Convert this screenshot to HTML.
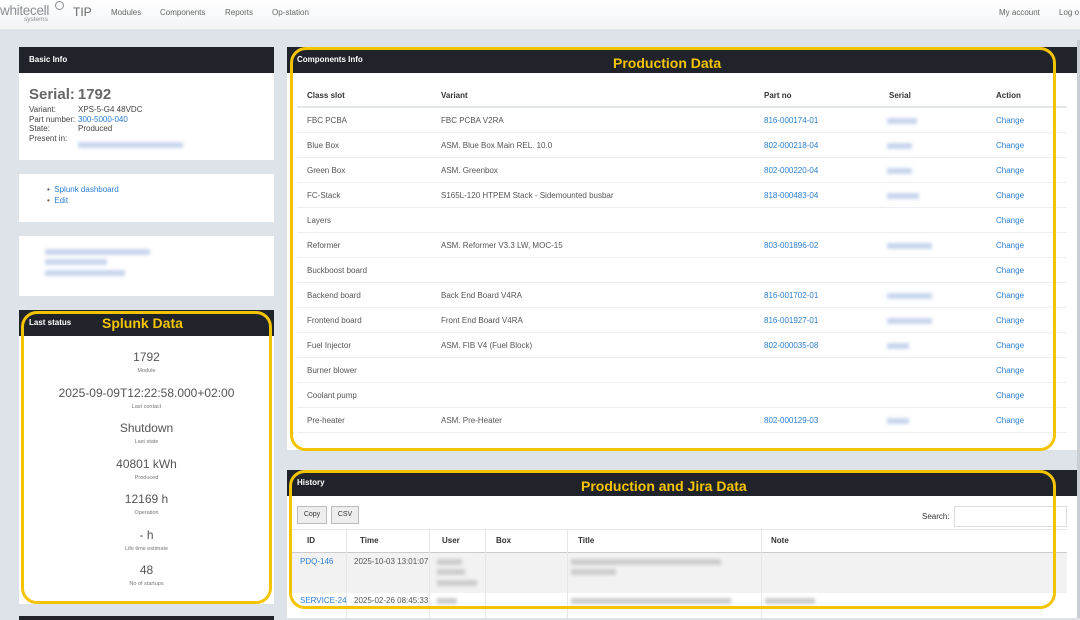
<!DOCTYPE html>
<html><head><meta charset="utf-8"><style>
*{margin:0;padding:0;box-sizing:border-box}
body{width:1080px;height:618px;overflow:hidden;background:#dde3e8;font-family:"Liberation Sans",sans-serif;color:#555;position:relative;font-size:8px}
.a{position:absolute}
.nav{left:0;top:0;width:1080px;height:30px;background:linear-gradient(#fff,#f2f4f6);border-bottom:1px solid #e6e9ec}
.hdr{background:#20242a;color:#fff;font-weight:bold;font-size:8px;padding-left:10px}
.box{background:#fff}
.lnk{color:#2a7ed3}
.blur{background:#c9d6ee;filter:blur(1.5px);height:6px}
.yl{border:3px solid #f5c400;border-radius:16px}
.ylt{color:#f5c400;font-weight:bold;font-size:14px;font-family:"Liberation Sans",sans-serif}
.row{left:297px;width:770px;height:25px;border-bottom:1px solid #eceff1}
.row span{position:absolute;top:8px}
.st{left:19px;width:255px;text-align:center}
.st b{display:block;font-weight:normal;font-size:12px;color:#555}
.st i{display:block;font-style:normal;font-size:5.5px;color:#777;margin-top:4px}
.th{font-weight:bold;color:#333}
</style></head><body>
<div class="a nav"></div>
<div class="a" style="left:0;top:3px;font-size:13.5px;color:#8a8f96;letter-spacing:-0.3px">whitecell</div>
<div class="a" style="left:55px;top:1px;width:9px;height:9px;border:1.5px solid #8a8f96;border-radius:50%"></div>
<div class="a" style="left:24px;top:16px;font-size:6.5px;color:#8a8f96">systems</div>
<div class="a" style="left:73px;top:5px;font-size:12px;color:#666">TIP</div>
<div class="a" style="left:111px;top:8px;color:#666">Modules</div>
<div class="a" style="left:160px;top:8px;color:#666">Components</div>
<div class="a" style="left:225px;top:8px;color:#666">Reports</div>
<div class="a" style="left:272px;top:8px;color:#666">Op-station</div>
<div class="a" style="left:999px;top:8px;color:#666">My account</div>
<div class="a" style="left:1059px;top:8px;color:#666">Log o</div>

<div class="a hdr" style="left:19px;top:47px;width:255px;height:26px;line-height:26px">Basic Info</div>
<div class="a box" style="left:19px;top:73px;width:255px;height:87px"></div>
<div class="a" style="left:29px;top:86px;font-size:15px;font-weight:bold;color:#666">Serial:&thinsp;1792</div>
<div class="a" style="left:29px;top:105px;line-height:9.7px;color:#444">Variant:<br>Part number:<br>State:<br>Present in:</div>
<div class="a" style="left:78px;top:105px;line-height:9.7px;color:#444">XPS-5-G4 48VDC<br><span class="lnk">300-5000-040</span><br>Produced</div>
<div class="a blur" style="left:78px;top:142px;width:105px"></div>

<div class="a box" style="left:19px;top:174px;width:255px;height:48px"></div>
<div class="a" style="left:47px;top:184px;line-height:11px">&bull;&nbsp;&nbsp;<span class="lnk">Splunk dashboard</span><br>&bull;&nbsp;&nbsp;<span class="lnk">Edit</span></div>
<div class="a box" style="left:19px;top:236px;width:255px;height:60px"></div>
<div class="a blur" style="left:45px;top:249px;width:105px"></div>
<div class="a blur" style="left:45px;top:259px;width:62px"></div>
<div class="a blur" style="left:45px;top:270px;width:80px"></div>

<div class="a hdr" style="left:19px;top:310px;width:255px;height:26px;line-height:26px">Last status</div>
<div class="a box" style="left:19px;top:336px;width:255px;height:268px"></div>
<div class="a st" style="top:350px"><b>1792</b><i>Module</i></div>
<div class="a st" style="top:386px"><b>2025-09-09T12:22:58.000+02:00</b><i>Last contact</i></div>
<div class="a st" style="top:421px"><b>Shutdown</b><i>Last state</i></div>
<div class="a st" style="top:457px"><b>40801 kWh</b><i>Produced</i></div>
<div class="a st" style="top:492px"><b>12169 h</b><i>Operation</i></div>
<div class="a st" style="top:528px"><b>- h</b><i>Life time estimate</i></div>
<div class="a st" style="top:563px"><b>48</b><i>No of startups</i></div>
<div class="a" style="left:19px;top:616px;width:255px;height:4px;background:#20242a"></div>
<div class="a yl" style="left:21px;top:311px;width:251px;height:293px"></div>
<div class="a ylt" style="left:102px;top:315px">Splunk Data</div>

<div class="a hdr" style="left:287px;top:47px;width:790px;height:26px;line-height:26px">Components Info</div>
<div class="a box" style="left:287px;top:73px;width:790px;height:377px"></div>
<div class="a row th" style="top:83px;border-bottom:2px solid #e3e6e9"><span style="left:10px">Class slot</span><span style="left:144px">Variant</span><span style="left:467px">Part no</span><span style="left:592px">Serial</span><span style="left:699px">Action</span></div>
<div id="rows"></div>
<div class="a yl" style="left:290px;top:47px;width:766px;height:404px"></div>
<div class="a ylt" style="left:613px;top:55px">Production Data</div>

<div class="a hdr" style="left:287px;top:470px;width:790px;height:26px;line-height:26px">History</div>
<div class="a box" style="left:287px;top:496px;width:790px;height:122px"></div>
<div class="a" style="left:297px;top:506px;width:30px;height:18px;border:1px solid #bbb;background:#eee;font-size:7px;text-align:center;line-height:16px;color:#333">Copy</div>
<div class="a" style="left:331px;top:506px;width:28px;height:18px;border:1px solid #bbb;background:#eee;font-size:7px;text-align:center;line-height:16px;color:#333">CSV</div>
<div class="a" style="left:922px;top:512px;color:#333">Search:</div>
<div class="a" style="left:954px;top:506px;width:113px;height:21px;border:1px solid #ddd"></div>
<div class="a" style="left:291px;top:529px;width:776px;height:24px;border-top:1px solid #e6e6e6;border-bottom:1px solid #ccc"></div>
<div class="a" style="left:291px;top:553px;width:776px;height:40px;background:#f2f2f2"></div>
<div class="a th" style="left:307px;top:536px">ID</div>
<div class="a th" style="left:360px;top:536px">Time</div>
<div class="a th" style="left:442px;top:536px">User</div>
<div class="a th" style="left:496px;top:536px">Box</div>
<div class="a th" style="left:578px;top:536px">Title</div>
<div class="a th" style="left:771px;top:536px">Note</div>
<div class="a" style="left:346px;top:529px;width:1px;height:89px;background:#e6e6e6"></div>
<div class="a" style="left:429px;top:529px;width:1px;height:89px;background:#e6e6e6"></div>
<div class="a" style="left:485px;top:529px;width:1px;height:89px;background:#e6e6e6"></div>
<div class="a" style="left:567px;top:529px;width:1px;height:89px;background:#e6e6e6"></div>
<div class="a" style="left:761px;top:529px;width:1px;height:89px;background:#e6e6e6"></div>
<div class="a lnk" style="left:300px;top:557px">PDQ-146</div>
<div class="a" style="left:354px;top:557px">2025-10-03 13:01:07</div>
<div class="a blur" style="left:437px;top:559px;width:25px;background:#ccc"></div>
<div class="a blur" style="left:437px;top:569px;width:28px;background:#ccc"></div>
<div class="a blur" style="left:437px;top:580px;width:40px;background:#ccc"></div>
<div class="a blur" style="left:571px;top:559px;width:150px;background:#ccc"></div>
<div class="a blur" style="left:571px;top:569px;width:45px;background:#ccc"></div>
<div class="a lnk" style="left:300px;top:596px">SERVICE-24</div>
<div class="a" style="left:354px;top:596px">2025-02-26 08:45:33</div>
<div class="a blur" style="left:437px;top:598px;width:20px;background:#ccc"></div>
<div class="a blur" style="left:571px;top:598px;width:160px;background:#ccc"></div>
<div class="a blur" style="left:765px;top:598px;width:50px;background:#ccc"></div>
<div class="a yl" style="left:289px;top:470px;width:767px;height:139px"></div>
<div class="a ylt" style="left:581px;top:478px">Production and Jira Data</div>
<div class="a" style="left:1077px;top:40px;width:3px;height:578px;background:#c8ced4"></div>
<script>
var d=[["FBC PCBA","FBC PCBA V2RA","816-000174-01",30],["Blue Box","ASM. Blue Box Main REL. 10.0","802-000218-04",25],["Green Box","ASM. Greenbox","802-000220-04",25],["FC-Stack","S165L-120 HTPEM Stack - Sidemounted busbar","818-000483-04",32],["Layers","","",0],["Reformer","ASM. Reformer V3.3 LW, MOC-15","803-001896-02",45],["Buckboost board","","",0],["Backend board","Back End Board V4RA","816-001702-01",45],["Frontend board","Front End Board V4RA","816-001927-01",45],["Fuel Injector","ASM. FIB V4 (Fuel Block)","802-000035-08",22],["Burner blower","","",0],["Coolant pump","","",0],["Pre-heater","ASM. Pre-Heater","802-000129-03",22]];
var h="";d.forEach(function(r,i){var t=108+i*25;h+='<div class="a row" style="top:'+t+'px"><span style="left:10px">'+r[0]+'</span><span style="left:144px">'+r[1]+'</span><span class="lnk" style="left:467px">'+r[2]+'</span>'+(r[3]?'<span class="blur" style="left:590px;top:10px;width:'+r[3]+'px"></span>':'')+'<span class="lnk" style="left:699px">Change</span></div>';});
document.getElementById("rows").innerHTML=h;
</script>
</body></html>
